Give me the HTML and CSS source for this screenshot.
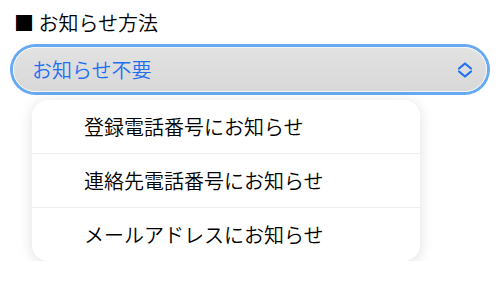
FILE: index.html
```html
<!DOCTYPE html>
<html lang="ja">
<head>
    <meta charset="UTF-8">
    <title>お知らせ方法</title>
    <link rel="stylesheet" href="styles.css">
</head>
<body>
    <div class="field">
        <div class="label">■ お知らせ方法</div>
        <div class="select">
            <span class="value">お知らせ不要</span>
            <svg class="chevron" width="18" height="18" viewBox="0 0 18 18">
                <path d="M3 7.5 L9 2.5 L15 7.5 M3 10.5 L9 15.5 L15 10.5" fill="none" stroke="#1f6ff2" stroke-width="2.2" stroke-linecap="round" stroke-linejoin="round"/>
            </svg>
        </div>
        <ul class="menu">
            <li>登録電話番号にお知らせ</li>
            <li>連絡先電話番号にお知らせ</li>
            <li>メールアドレスにお知らせ</li>
        </ul>
    </div>
</body>
</html>
```

FILE: styles.css
```css
body {
    margin: 0;
    padding: 0;
    background: #fff;
    font-family: "Noto Sans CJK JP", "Noto Sans", sans-serif;
    font-weight: 350;
    color: #000;
}

.field {
    padding: 9px 13px 0 13px;
}

.label {
    font-size: 20px;
    line-height: 28px;
    padding-left: 1px;
}

.select {
    margin-top: 10px;
    height: 43px;
    border: 1px solid #f4f4f4;
    border-radius: 24px;
    box-shadow: 0 0 0 3px #67aaf1;
    background: linear-gradient(#e2e2e2, #d8d8d8);
    display: flex;
    align-items: center;
    justify-content: space-between;
    padding: 0 12px 0 18px;
}

.select .value {
    font-size: 20px;
    color: #1f6ff2;
}

.menu {
    list-style: none;
    margin: 8px 0 0 19px;
    padding: 0;
    width: 388px;
    background: #fff;
    border-radius: 16px;
    box-shadow: 0 2px 14px rgba(0, 0, 0, 0.13);
}

.menu li {
    font-size: 20px;
    height: 53px;
    line-height: 53px;
    padding-left: 52px;
    border-top: 1px solid #efefef;
}

.menu li:first-child {
    border-top: none;
}
```
